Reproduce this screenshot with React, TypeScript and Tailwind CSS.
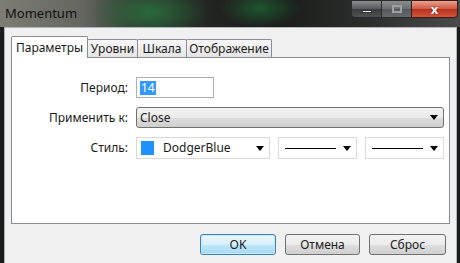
import React from "react";

const Arrow = () => (
  <svg width="8" height="5" viewBox="0 0 8 5" className="shrink-0">
    <path d="M0 0H8L4 5Z" fill="#000" />
  </svg>
);

function Tab({ label, active, w }: { label: string; active?: boolean; w: number }) {
  return active ? (
    <div
      className="relative z-10 -mb-px h-[22px] border border-b-0 border-[#898c95] bg-white flex items-center justify-center rounded-t-[2px]"
      style={{ width: w }}
    >
      {label}
    </div>
  ) : (
    <div
      className="-ml-px h-[18px] border border-b-0 border-[#898c95] bg-[linear-gradient(#f7f7f7,#e4e4e4)] flex items-center justify-center rounded-t-[2px]"
      style={{ width: w }}
    >
      {label}
    </div>
  );
}

function LineCombo() {
  return (
    <div className="w-[79px] h-[22px] border border-[#dadada] bg-white flex items-center pl-[6px] pr-[5px] gap-[7px]">
      <div className="flex-1 h-px bg-black" />
      <Arrow />
    </div>
  );
}

function Btn({ label, def, w }: { label: string; def?: boolean; w: number }) {
  return (
    <div
      className={
        "h-[21px] rounded-[3px] border flex items-center justify-center " +
        (def
          ? "border-[#3c7fb1] bg-[linear-gradient(#eaf6fd_0%,#d9f0fc_50%,#bee6fd_51%,#a7d9f5_100%)] shadow-[inset_0_0_0_1px_#c8e8fb]"
          : "border-[#707070] bg-[linear-gradient(#f2f2f2_0%,#ebebeb_50%,#dddddd_51%,#cfcfcf_100%)]")
      }
      style={{ width: w }}
    >
      {label}
    </div>
  );
}

export default function App() {
  return (
    <div className="w-[460px] h-[263px] overflow-hidden flex flex-col font-['Noto_Sans',sans-serif] text-[12px] text-[#1a1a1a] bg-[#1b1d1c]">
      {/* Title bar */}
      <div className="h-[27px] shrink-0 flex justify-between bg-[radial-gradient(ellipse_60px_30px_at_150px_12px,#2a6a3a_0%,transparent_100%),radial-gradient(ellipse_40px_20px_at_260px_8px,#1f5530_0%,transparent_100%),linear-gradient(90deg,#7d7d72_0%,#64665f_18%,#2a2d2a_32%,#1a1c1a_60%,#2c2e2d_80%,#4a4c4c_100%)]">
        <div className="pl-[5px] pt-[4px] text-[13px] text-[#111]">Momentum</div>
        <div className="flex h-[18px] mr-[2px]">
          <div className="w-[31px] h-full border border-[#2a2a2a] rounded-bl-[4px] bg-[linear-gradient(#8a8d90,#55585c_50%,#3a3d40_51%,#4e5256)] flex items-center justify-center">
            <div className="w-[10px] h-[3px] bg-white mt-[5px] border border-[#333]" />
          </div>
          <div className="w-[29px] h-full border-y border-[#2a2a2a] bg-[linear-gradient(#8a8d90,#6a6d70_50%,#55585c_51%,#66696c)] flex items-center justify-center">
            <div className="w-[10px] h-[8px] border-2 border-[#9ea1a4]" />
          </div>
          <div className="w-[47px] h-full border border-[#3a1a1a] rounded-br-[4px] bg-[linear-gradient(#e8a08c,#cf5a44_50%,#b8321c_51%,#d4543a)] flex items-center justify-center">
            <span className="text-white font-bold text-[13px] leading-none [text-shadow:0_0_2px_#600]">x</span>
          </div>
        </div>
      </div>

      {/* Client */}
      <div className="flex-1 ml-[4px] mr-[3px] border-t border-l border-r border-[#aeb4b8] bg-[#f0f0f0] px-[6px] pt-[8px] flex flex-col">
        <div className="flex items-end h-[21px]">
          <Tab label="Параметры" active w={77} />
          <Tab label="Уровни" w={51} />
          <Tab label="Шкала" w={50} />
          <Tab label="Отображение" w={86} />
        </div>
        <div className="h-[167px] border border-[#898c95] bg-white pt-[19px] pr-[7px]">
          <div className="grid grid-cols-[116px_1fr] gap-x-[8px] gap-y-[9px] items-center">
            <div className="text-right">Период:</div>
            <div className="w-[78px] h-[21px] border border-[#abadb3] bg-white flex items-center pl-[3px]">
              <span className="bg-[#3399ff] text-white px-[1px] leading-[14px]">14</span>
            </div>
            <div className="text-right">Применить к:</div>
            <div className="h-[21px] rounded-[3px] border border-[#707070] bg-[linear-gradient(#f2f2f2_0%,#ebebeb_50%,#dddddd_51%,#cfcfcf_100%)] flex items-center pl-[3px] pr-[5px]">
              <span className="flex-1">Close</span>
              <Arrow />
            </div>
            <div className="text-right">Стиль:</div>
            <div className="flex gap-[8px]">
              <div className="w-[134px] h-[22px] border border-[#dadada] bg-white flex items-center pl-[4px] pr-[5px]">
                <div className="w-[13px] h-[14px] bg-[#1e90ff]" />
                <span className="flex-1 pl-[9px]">DodgerBlue</span>
                <Arrow />
              </div>
              <LineCombo />
              <LineCombo />
            </div>
          </div>
        </div>
        <div className="flex justify-end gap-[9px] mt-[10px] mr-[4px]">
          <Btn label="OK" def w={76} />
          <Btn label="Отмена" w={75} />
          <Btn label="Сброс" w={77} />
        </div>
      </div>
    </div>
  );
}
